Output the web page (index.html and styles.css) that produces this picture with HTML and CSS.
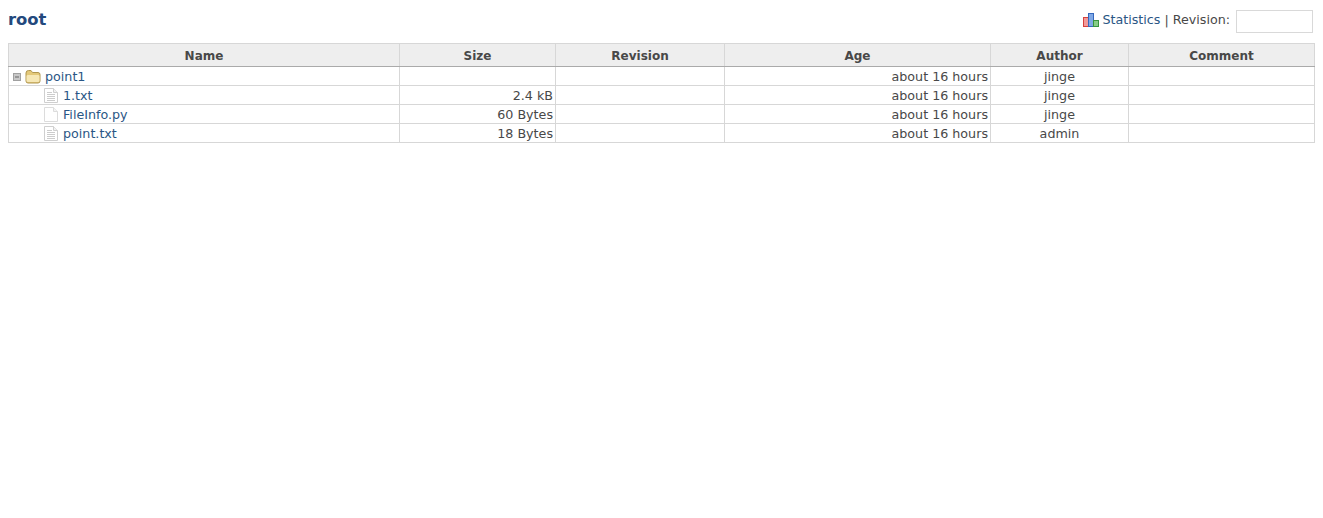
FILE: index.html
```html
<!DOCTYPE html>
<html lang="en">
<head>
<meta charset="utf-8">
<title>root</title>
<link rel="stylesheet" href="styles.css">
</head>
<body>
<div class="contextual">
  <svg class="icon-stats" width="17" height="14" viewBox="0 0 17 14"><rect x="0.5" y="4.5" width="5" height="9" fill="#f29a9a" stroke="#d6403c"/><rect x="5.5" y="0.5" width="5" height="13" fill="#7fa8e6" stroke="#3568bd"/><rect x="10.5" y="7.5" width="5" height="6" fill="#86cc86" stroke="#3a9440"/></svg>
  <a href="#" class="link">Statistics</a>
  <span class="sep">|</span>
  <label class="rev-label">Revision:</label>
  <input class="rev-input" type="text">
</div>
<h2 class="title">root</h2>
<table class="entries">
  <colgroup>
    <col class="c1"><col class="c2"><col class="c3"><col class="c4"><col class="c5"><col class="c6">
  </colgroup>
  <thead>
    <tr><th>Name</th><th>Size</th><th>Revision</th><th>Age</th><th>Author</th><th>Comment</th></tr>
  </thead>
  <tbody>
    <tr>
      <td class="name"><div class="entry dir">
        <svg class="expander" width="8" height="8" viewBox="0 0 8 8"><rect x="0.5" y="0.5" width="7" height="7" fill="#c8c8c8" stroke="#a0a0a0"/><rect x="2" y="3.5" width="4" height="1" fill="#666"/></svg>
        <svg class="folder" width="16" height="14" viewBox="0 0 16 14"><path d="M1 3 Q1 0.5 3.5 0.5 H6 L7.5 2.5 H13 Q15 2.5 15 4.5 V11 Q15 13 13 13 H3 Q1 13 1 11 Z" fill="#e3c878" stroke="#b09650"/><path d="M1.5 6 Q1.5 5 3 5 H13 Q14.5 5 14.5 6 V10.5 Q14.5 12 13 12 H3 Q1.5 12 1.5 10.5 Z" fill="#f6e7b4"/></svg>
        <a href="#" class="link">point1</a>
      </div></td>
      <td></td><td></td><td class="num">about 16 hours</td><td class="ctr">jinge</td><td></td>
    </tr>
    <tr>
      <td class="name"><div class="entry file">
        <svg class="doc" width="14" height="15" viewBox="0 0 14 15"><path d="M0.5 0.5 H9.5 L13.5 4.5 V14.5 H0.5 Z" fill="#fff" stroke="#cfcfcf"/><path d="M9.5 0.5 V4.5 H13.5" fill="#f2f2f2" stroke="#cfcfcf"/><path d="M3 4.5 H8 M3 6.5 H11 M3 8.5 H11 M3 10.5 H11 M3 12.5 H11" stroke="#cccccc"/></svg>
        <a href="#" class="link">1.txt</a>
      </div></td>
      <td class="num">2.4 kB</td><td></td><td class="num">about 16 hours</td><td class="ctr">jinge</td><td></td>
    </tr>
    <tr>
      <td class="name"><div class="entry file">
        <svg class="doc" width="14" height="15" viewBox="0 0 14 15"><path d="M0.5 0.5 H9.5 L13.5 4.5 V14.5 H0.5 Z" fill="#fff" stroke="#dcdcdc"/><path d="M9.5 0.5 V4.5 H13.5" fill="#f4f4f4" stroke="#dcdcdc"/></svg>
        <a href="#" class="link">FileInfo.py</a>
      </div></td>
      <td class="num">60 Bytes</td><td></td><td class="num">about 16 hours</td><td class="ctr">jinge</td><td></td>
    </tr>
    <tr>
      <td class="name"><div class="entry file">
        <svg class="doc" width="14" height="15" viewBox="0 0 14 15"><path d="M0.5 0.5 H9.5 L13.5 4.5 V14.5 H0.5 Z" fill="#fff" stroke="#cfcfcf"/><path d="M9.5 0.5 V4.5 H13.5" fill="#f2f2f2" stroke="#cfcfcf"/><path d="M3 4.5 H8 M3 6.5 H11 M3 8.5 H11 M3 10.5 H11 M3 12.5 H11" stroke="#cccccc"/></svg>
        <a href="#" class="link">point.txt</a>
      </div></td>
      <td class="num">18 Bytes</td><td></td><td class="num">about 16 hours</td><td class="ctr">admin</td><td></td>
    </tr>
  </tbody>
</table>
</body>
</html>
```
FILE: styles.css
```css
html, body { margin: 0; padding: 0; background: #fff; }
body {
  padding: 10px 8px 0;
  font-family: "DejaVu Sans", Verdana, sans-serif;
  font-size: 12.7px;
  color: #484848;
}
.link { color: #2a5685; text-decoration: none; }
.title {
  margin: 0;
  height: 33px;
  font-size: 16.4px;
  line-height: 20px;
  font-weight: bold;
  color: #23497d;
}
.contextual {
  float: right;
  display: flex;
  align-items: flex-start;
  gap: 5px;
  height: 23px;
  margin-right: 2px;
  line-height: 19px;
}
.icon-stats { margin: 3px -3px 0 0; }
.sep { margin: 0 -1px; }
.rev-input {
  width: 77px;
  height: 23px;
  box-sizing: border-box;
  margin: 0 0 0 1px;
  border: 1px solid #d9d9d9;
  background: #fff;
  padding: 0;
}
.entries {
  width: 1306px;
  border-collapse: collapse;
  table-layout: fixed;
  border: 1px solid #d7d7d7;
}
.c1 { width: 391px; }
.c2 { width: 156px; }
.c3 { width: 169px; }
.c4 { width: 266px; }
.c5 { width: 138px; }
.c6 { width: 186px; }
th {
  height: 21px;
  padding: 1px 0 0;
  background: #eeeeee;
  border: 1px solid #d7d7d7;
  border-bottom: 1px solid #aaa;
  font-size: 12px;
  font-weight: bold;
  color: #484848;
  text-align: center;
  vertical-align: middle;
}
td {
  height: 17px;
  padding: 1px 2px 0;
  border: 1px solid #d7d7d7;
  line-height: 17px;
  white-space: nowrap;
  overflow: hidden;
}
.num { text-align: right; }
.ctr { text-align: center; }
td.name { height: 18px; padding: 0; }
.entry {
  display: flex;
  align-items: center;
  gap: 4px;
  height: 18px;
}
.entry .link { padding-top: 2px; line-height: 18px; }
.dir { padding-left: 4px; }
.file { padding-left: 35px; }
.expander { margin-top: 2px; }
.folder { margin-top: 2px; }
.doc { margin: 1px 1px 0 0; }
```
